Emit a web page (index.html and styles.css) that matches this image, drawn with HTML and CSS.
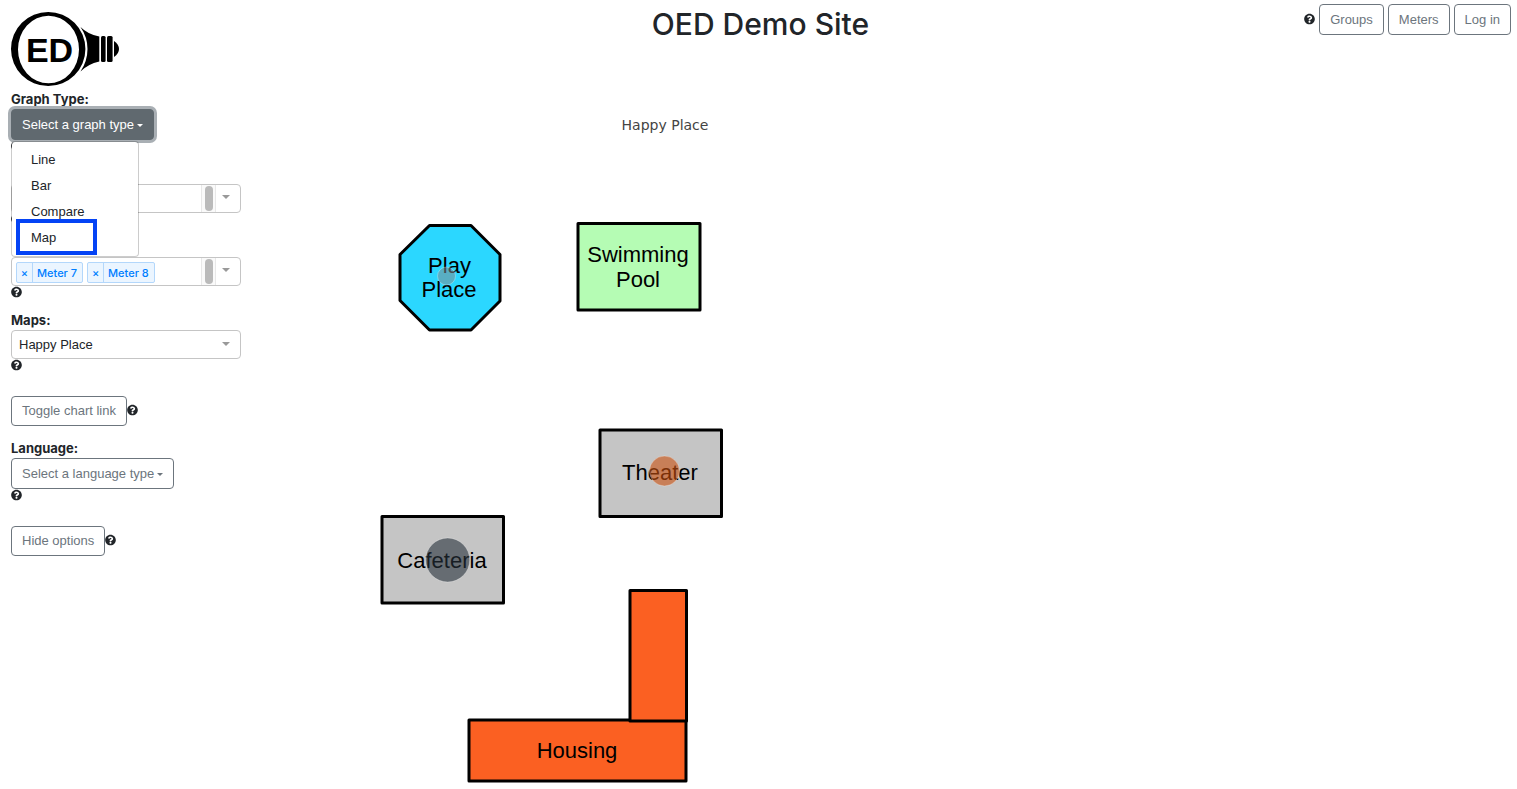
FILE: index.html
```html
<!DOCTYPE html>
<html lang="en">
<head>
<meta charset="utf-8">
<title>OED Demo Site</title>
<link rel="stylesheet" href="styles.css">
</head>
<body>
<svg class="defs" aria-hidden="true">
  <symbol id="help" viewBox="0 0 512 512"><path fill="currentColor" d="M504 256c0 137-111 248-248 248S8 393 8 256 119 8 256 8s248 111 248 248zM262.700 90c-54.500 0-89.300 23-116.500 63.800-3.500 5.300-2.400 12.400 2.700 16.300l34.700 26.300c5.200 3.900 12.600 3 16.700-2.100 17.900-22.700 30.100-35.800 57.300-35.800 20.400 0 45.700 13.100 45.700 33 0 15-12.400 22.700-32.500 34C247.100 238.500 216 254.900 216 296v4c0 6.600 5.400 12 12 12h56c6.600 0 12-5.400 12-12v-1.300c0-28.500 83.200-29.600 83.200-106.700 0-58-60.200-102-116.500-102zM256 338c-25.400 0-46 20.600-46 46s20.600 46 46 46 46-20.600 46-46-20.600-46-46-46z"/></symbol>
</svg>
<header class="header">
  <a class="logo" href="#" aria-label="Home">
    <svg width="110" height="76" viewBox="10 11 110 76">
      <path fill-rule="evenodd" d="M11 49a37.200 37 0 1 0 74.400 0a37.200 37 0 1 0-74.400 0zM18 49.500a30.500 33.800 0 1 0 61 0a30.500 33.800 0 1 0-61 0z"/>
      <path d="M80.500 27Q88 34.500 99.300 36.500V61.500Q88 64 80.500 71.500Q87.500 61 87.500 49Q87.500 37 80.500 27z"/>
      <rect x="101" y="36" width="4.600" height="26" rx="1.500"/>
      <rect x="107" y="36" width="5.600" height="26" rx="1.500"/>
      <path d="M114 41Q119 44.500 119 49T114 57z"/>
      <text class="logo-text" x="49.500" y="61.500" text-anchor="middle">ED</text>
    </svg>
  </a>
  <h1 class="title">OED Demo Site</h1>
  <nav class="nav">
    <svg class="help"><use href="#help"/></svg>
    <button class="btn">Groups</button>
    <button class="btn">Meters</button>
    <button class="btn">Log in</button>
  </nav>
</header>
<main class="main">
  <aside class="sidebar">
    <section class="field">
      <p class="label" id="graph-label">Graph Type:</p>
      <div class="dropdown">
        <button class="btn btn-active" aria-expanded="true" aria-describedby="graph-label">Select a graph type<span class="caret"></span></button>
        <div class="menu">
          <button class="item">Line</button>
          <button class="item">Bar</button>
          <button class="item">Compare</button>
          <button class="item marked">Map</button>
        </div>
      </div>
      <svg class="help"><use href="#help"/></svg>
    </section>
    <section class="field covered" aria-label="Groups">
      <div class="select">
        <div class="chips"></div>
        <span class="track"><span class="thumb"></span></span>
        <button class="toggle" aria-label="Show groups"><span class="arrow"></span></button>
      </div>
      <svg class="help"><use href="#help"/></svg>
    </section>
    <section class="field covered" aria-label="Meters">
      <div class="select">
        <div class="chips">
          <span class="chip"><button class="remove" aria-label="Remove Meter 7">×</button><span class="chip-name">Meter 7</span></span>
          <span class="chip"><button class="remove" aria-label="Remove Meter 8">×</button><span class="chip-name">Meter 8</span></span>
        </div>
        <span class="track"><span class="thumb"></span></span>
        <button class="toggle" aria-label="Show meters"><span class="arrow"></span></button>
      </div>
      <svg class="help"><use href="#help"/></svg>
    </section>
    <section class="field">
      <label class="label" for="maps">Maps:</label>
      <div class="select">
        <select class="native" id="maps"><option>Happy Place</option></select>
        <span class="toggle"><span class="arrow"></span></span>
      </div>
      <svg class="help"><use href="#help"/></svg>
    </section>
    <div class="action">
      <button class="btn">Toggle chart link</button>
      <svg class="help"><use href="#help"/></svg>
    </div>
    <section class="field">
      <p class="label" id="language-label">Language:</p>
      <button class="btn" aria-describedby="language-label">Select a language type<span class="caret"></span></button>
      <svg class="help"><use href="#help"/></svg>
    </section>
    <div class="action">
      <button class="btn">Hide options</button>
      <svg class="help"><use href="#help"/></svg>
    </div>
  </aside>
  <section class="plot">
    <svg class="map" viewBox="253 89 824 700" role="img" aria-label="Happy Place map">
      <text class="map-title" x="665" y="130">Happy Place</text>
      <g class="shapes">
        <path fill="#2bd7ff" d="M429.500 225.500H471L500 254.500V301L471 330H429.500L400 300.500V254.500z"/>
        <rect fill="#b5fcb4" x="578" y="223.500" width="122" height="86.500"/>
        <rect fill="#c5c5c5" x="600" y="430" width="121.500" height="86.500"/>
        <rect fill="#c5c5c5" x="382" y="516.500" width="121.500" height="86.500"/>
        <rect fill="#fb6022" x="469" y="720" width="217" height="61"/>
        <rect fill="#fb6022" x="630" y="590.500" width="56.500" height="130.500"/>
      </g>
      <g class="place">
        <text x="449.500" y="273">Play</text>
        <text x="449" y="297">Place</text>
        <text x="638" y="262">Swimming</text>
        <text x="638" y="287">Pool</text>
        <text x="660" y="480">Theater</text>
        <text x="442" y="568">Cafeteria</text>
        <text x="577" y="758">Housing</text>
      </g>
      <g class="bubbles">
        <circle cx="446.500" cy="276" r="9" fill="#7f8c91" fill-opacity=".55"/>
        <circle cx="664.500" cy="471" r="15" fill="#c9500f" fill-opacity=".6"/>
        <circle cx="447.700" cy="560" r="22" fill="#27313a" fill-opacity=".6"/>
      </g>
    </svg>
  </section>
</main>
</body>
</html>
```
FILE: styles.css
```css
* { box-sizing: border-box; }
body {
  margin: 0;
  color: #212529;
  background: #fff;
  font: 13px/20px "Liberation Sans", Arial, sans-serif;
}
button, select { font: inherit; color: inherit; cursor: pointer; }
.defs { position: absolute; width: 0; height: 0; }
.header {
  display: grid;
  grid-template-columns: 1fr auto 1fr;
  align-items: start;
  padding: 4px 6px 0 10px;
}
.logo { display: block; padding-top: 7px; color: #000; }
.logo svg { display: block; }
.logo-text {
  font: bold 34px "Liberation Sans", sans-serif;
}
.title {
  margin: 0;
  font: 500 30px/40px Inter, "Liberation Sans", sans-serif;
}
.nav { display: flex; justify-content: flex-end; gap: 4px; }
.nav .help { margin-top: 9px; }
.btn {
  height: 31px;
  padding: 0 10px;
  border: 1px solid #6c757d;
  border-radius: 4px;
  color: #6c757d;
  background: #fff;
  white-space: nowrap;
}
.btn-active {
  color: #fff;
  background: #60696f;
  border-color: #60696f;
  box-shadow: 0 0 0 3px #a9afb4;
}
.caret {
  display: inline-block;
  margin-left: 3px;
  vertical-align: 2px;
  border: 3px solid transparent;
  border-top-color: currentColor;
  border-bottom: 0;
}
.help { display: block; flex: none; width: 11px; height: 12px; color: #212529; }
.main { display: flex; align-items: flex-start; gap: 12px; }
.sidebar {
  display: flex;
  flex-direction: column;
  gap: 12px;
  flex: none;
  width: 241px;
  padding: 2px 0 0 11px;
}
.field { display: flex; flex-direction: column; align-items: flex-start; }
.covered { padding-top: 20px; }
.label {
  margin: 0;
  font: 700 13px/20px Inter, "Liberation Sans", sans-serif;
}
.dropdown { position: relative; display: flex; }
.menu {
  position: absolute;
  top: 32px;
  left: 0;
  z-index: 2;
  width: 128px;
  padding: 5px 0;
  border: 1px solid rgba(0, 0, 0, .2);
  border-radius: 4px;
  background: #fff;
  background-clip: padding-box;
}
.item {
  position: relative;
  display: block;
  width: 100%;
  height: 26px;
  padding: 0 19px;
  border: 0;
  background: none;
  text-align: left;
}
.marked::after {
  content: "";
  position: absolute;
  inset: -6px 41px -4px 4px;
  border: 4px solid #0443f5;
}
.select {
  position: relative;
  display: flex;
  width: 100%;
  height: 29px;
  border: 1px solid #c5c5c5;
  border-radius: 4px;
  background: #fff;
}
.chips { display: flex; flex: 1; gap: 4px; padding: 4px; }
.chip {
  display: flex;
  height: 21px;
  border: 1px solid #b3d7fb;
  border-radius: 2px;
  background: #ebf5ff;
  color: #007eff;
  font: 500 11px/20px Inter, "Liberation Sans", sans-serif;
}
.remove {
  width: 16px;
  padding: 0;
  border: 0;
  border-right: 1px solid #b3d7fb;
  background: none;
}
.chip-name { padding: 0 5px 0 4px; }
.track {
  display: flex;
  justify-content: center;
  width: 15px;
  padding: 1px 0;
  border: 1px solid #e8e8e8;
  border-width: 0 1px;
  background: #fafafa;
}
.thumb { width: 8px; border-radius: 4px; background: #bababa; }
.toggle {
  display: flex;
  justify-content: center;
  width: 24px;
  padding: 11px 4px 0 0;
  border: 0;
  background: none;
}
button.toggle { align-items: flex-start; padding-top: 10px; }
.arrow {
  width: 8px;
  height: 4px;
  border: 4px solid transparent;
  border-top-color: #999;
  border-bottom: 0;
}
.native {
  flex: 1;
  padding: 0 7px;
  border: 0;
  background: none;
  appearance: none;
}
.action { display: flex; align-items: flex-start; padding-top: 13px; }
.action .btn { height: 30px; }
.action .help { margin-top: 8px; }
.plot { flex: 1; min-width: 0; padding-top: 2px; }
.map { display: block; width: 100%; max-width: 824px; }
.map-title {
  font: 14px "DejaVu Sans", Verdana, sans-serif;
  fill: #444;
  text-anchor: middle;
}
.shapes { stroke: #000; stroke-width: 3px; stroke-linejoin: round; }
.place {
  font: 22px "Liberation Sans", Arial, sans-serif;
  text-anchor: middle;
}
.bubbles { stroke: #fff; stroke-opacity: .3; }
```
